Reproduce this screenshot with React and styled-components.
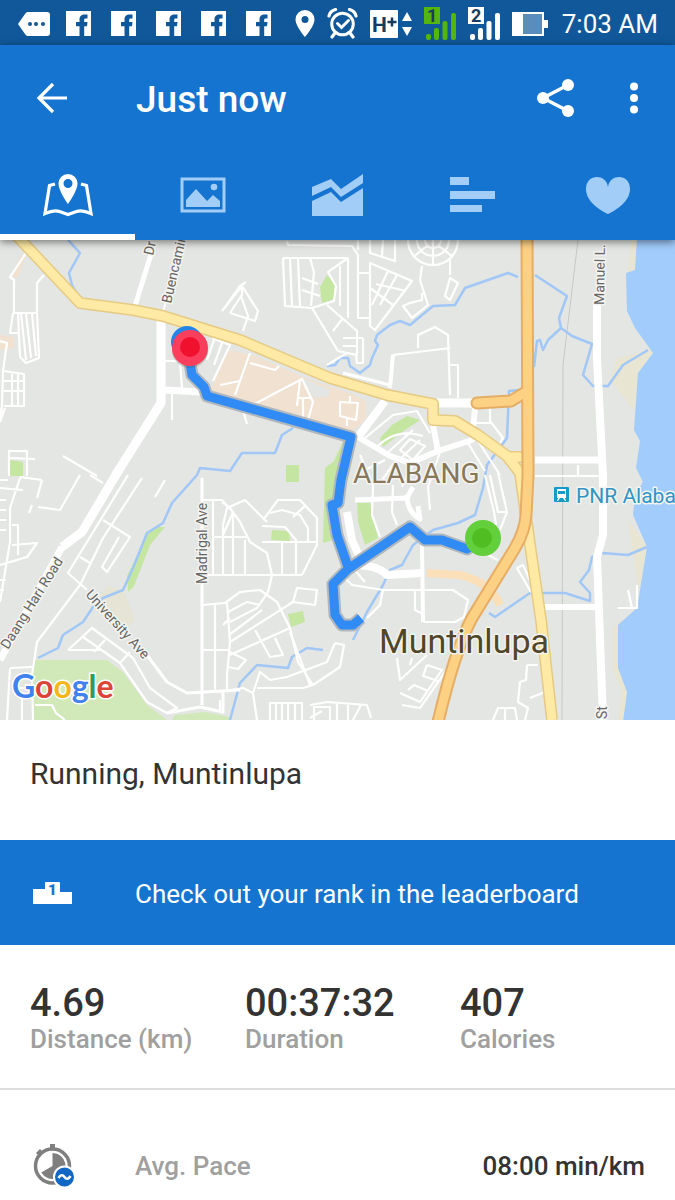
import React, { useState } from "react";
import styled, { createGlobalStyle } from "styled-components";

const GlobalStyle = createGlobalStyle`
  * {
    box-sizing: border-box;
  }
  body {
    margin: 0;
    background: #ffffff;
    color: #333333;
    font-family: Roboto, "Liberation Sans", sans-serif;
  }
  button {
    border: none;
    padding: 0;
    background: none;
    color: inherit;
    font: inherit;
    cursor: pointer;
  }
  svg {
    display: block;
  }
`;

const Page = styled.main`
  min-height: 100vh;
`;

const StatusBar = styled.div`
  display: flex;
  justify-content: space-between;
  align-items: center;
  height: 45px;
  padding: 2px 17px 0 18px;
  background-color: #10589a;
  color: #ffffff;
`;

const StatusGroup = styled.div`
  display: flex;
  align-items: center;
  gap: ${props => props.$gap}px;
`;

const Clock = styled.time`
  font-size: 26px;
  line-height: 32px;
  white-space: nowrap;
`;

const Header = styled.header`
  position: relative;
  background-color: #1474d0;
  color: #ffffff;
  box-shadow: 0 2px 8px rgba(0, 0, 0, 0.5);
`;

const AppBar = styled.div`
  display: flex;
  align-items: center;
  height: 105px;
  padding: 0 10px 0 20px;
`;

const Title = styled.h1`
  flex: 1;
  margin: 0 0 0 52px;
  padding-top: 4px;
  font-size: 37px;
  line-height: 44px;
  font-weight: 500;
`;

const IconButton = styled.button`
  display: grid;
  place-items: center;
  width: ${props => props.$width}px;
  height: 64px;
`;

const Tabs = styled.nav`
  display: grid;
  grid-template-columns: repeat(5, 1fr);
`;

const Tab = styled.button`
  display: grid;
  place-items: center;
  height: 90px;
  padding-top: 6px;
  border-bottom: 6px solid ${props => (props.$active ? "#ffffff" : "transparent")};
  color: ${props => (props.$active ? "#ffffff" : "#a1cdf6")};
`;

const MapView = styled.svg`
  width: 100%;
  height: 480px;
  background-color: #e4e6e3;
`;

const Label = styled.text`
  font-family: Roboto, sans-serif;
  font-size: ${props => props.$size}px;
  font-weight: ${props => props.$weight || 400};
  fill: ${props => props.$color || "#666666"};
  stroke: #f4f4f0;
  stroke-width: 3px;
  stroke-linejoin: round;
  paint-order: stroke;
`;

const Activity = styled.h2`
  margin: 0;
  padding: 36px 30px 48px;
  font-size: 30px;
  line-height: 36px;
  font-weight: 400;
`;

const Leaderboard = styled.button`
  display: flex;
  align-items: center;
  gap: 60px;
  width: 100%;
  height: 105px;
  padding: 2px 30px 0;
  background-color: #1474d0;
  color: #ffffff;
  font-size: 26px;
  line-height: 32px;
  text-align: left;
`;

const Stats = styled.dl`
  display: grid;
  grid-template-columns: repeat(3, 1fr);
  margin: 0;
  padding: 38px 0 33px 30px;
  border-bottom: 2px solid #dedede;
`;

const Stat = styled.div`
  display: flex;
  flex-direction: column-reverse;
`;

const StatLabel = styled.dt`
  color: #a0a0a0;
  font-size: 26px;
  line-height: 32px;
  font-weight: 500;
`;

const StatValue = styled.dd`
  margin: 0;
  font-size: 38px;
  line-height: 40px;
  font-weight: 500;
`;

const Detail = styled.dl`
  display: flex;
  align-items: center;
  margin: 0;
  padding: 60px 30px 18px;
`;

const DetailIcon = styled.div`
  width: 105px;
  height: 32px;
  display: flex;
  align-items: center;
`;

const DetailValue = styled.dd`
  margin: 0 0 0 auto;
  font-size: 26px;
  line-height: 32px;
  font-weight: 500;
`;

const TagIcon = () => (
  <svg width="32" height="26" viewBox="0 0 32 26">
    <path d="M10 1h19a3 3 0 0 1 3 3v18a3 3 0 0 1-3 3H10q-2 0-3-2L0 13l7-10q1-2 3-2z" fill="#fff" />
    <g fill="#10589a">
      <circle cx="12" cy="13" r="2" />
      <circle cx="18" cy="13" r="2" />
      <circle cx="25" cy="13" r="2" />
    </g>
  </svg>
);

const FacebookIcon = () => (
  <svg width="25" height="25" viewBox="0 0 25 25">
    <path
      fill="#fff"
      fillRule="evenodd"
      d="M0 0h25v25H0zM13.500 25V15.3H10V11h3.500V8.500C13.500 5 15.500 3.500 18.500 3.500h3v4h-2c-1 0-1.300.5-1.300 1.500v2h3.300l-.5 4.300h-2.800V25z"
    />
  </svg>
);

const PinIcon = () => (
  <svg width="20" height="27" viewBox="0 0 20 27">
    <path fill="#fff" fillRule="evenodd" d="M10 0a9.500 9.500 0 0 1 9.500 9.500C19.500 16 10 27 10 27S.5 16 .5 9.500A9.500 9.500 0 0 1 10 0zm0 6a3.500 3.500 0 1 0 0 7 3.500 3.500 0 0 0 0-7z" />
  </svg>
);

const AlarmIcon = () => (
  <svg width="31" height="31" viewBox="0 0 31 31" fill="none" stroke="#fff" strokeLinecap="round">
    <circle cx="15.500" cy="16" r="10.800" strokeWidth="3" />
    <path d="M2 8q1-5 6.500-6.500M29 8q-1-5-6.500-6.500M8 25l-3 4M23 25l3 4" strokeWidth="3.200" />
    <path d="M10.500 15.500l4 4 7-7" strokeWidth="3" />
  </svg>
);

const DataIcon = () => (
  <svg width="42" height="28" viewBox="0 0 42 28">
    <rect width="28" height="28" rx="1" fill="#fff" />
    <text x="2" y="22" fill="#183b60" fontFamily="Roboto, sans-serif" fontSize="21" fontWeight="700">H</text>
    <path d="M17.500 12h9M22 7.500v9" stroke="#183b60" strokeWidth="2.500" />
    <path d="M37 2l5 9H32zM37 26l5-9H32zM32 14h10" fill="#fff" />
  </svg>
);

const SignalIcon = ({ sim, color, ink }) => (
  <svg width="32" height="33" viewBox="0 0 32 33" fill={color}>
    <rect width="16" height="17" />
    <text x="3" y="15" fill={ink} fontFamily="Roboto, sans-serif" fontSize="18" fontWeight="700">{sim}</text>
    <rect x="2" y="27" width="5" height="6" rx="2" />
    <rect x="10" y="21" width="5" height="12" rx="2" />
    <rect x="18.500" y="14" width="5" height="19" rx="2" />
    <rect x="27" y="6" width="5" height="27" rx="2" />
  </svg>
);

const BatteryIcon = () => (
  <svg width="38" height="26" viewBox="0 0 38 26">
    <path d="M0 1h32v8h4v8h-4v8H0z" fill="#fff" />
    <path d="M11 3h19v20H11z" fill="#5b8dbc" />
  </svg>
);

const BackIcon = () => (
  <svg width="32" height="32" viewBox="0 0 32 32" fill="none" stroke="#fff" strokeWidth="3.200">
    <path d="M31 16H3M17 2L3 16l14 14" />
  </svg>
);

const ShareIcon = () => (
  <svg width="38" height="38" viewBox="0 0 38 38" fill="#fff">
    <path d="M31 6L6 19l25 13" fill="none" stroke="#fff" strokeWidth="3.500" />
    <circle cx="31" cy="6" r="6" />
    <circle cx="6" cy="19" r="6" />
    <circle cx="31" cy="32" r="6" />
  </svg>
);

const MoreIcon = () => (
  <svg width="10" height="32" viewBox="0 0 10 32" fill="#fff">
    <circle cx="5" cy="4.500" r="4" />
    <circle cx="5" cy="16" r="4" />
    <circle cx="5" cy="27.500" r="4" />
  </svg>
);

const MapIcon = () => (
  <svg width="52" height="44" viewBox="0 0 52 44">
    <path d="M13 11L7.500 12.500L3 40.500q9-4 14.500-2l8.500 3 8.500-3q5.500-2 14.500 2L44.500 12.500L39 11" fill="none" stroke="currentColor" strokeWidth="3.200" />
    <path fill="currentColor" fillRule="evenodd" d="M26 1a9.500 9.500 0 0 1 9.500 9.500C35.500 18 26 31 26 31s-9.500-13-9.500-20.500A9.500 9.500 0 0 1 26 1zm0 5a4.500 4.500 0 1 0 0 9 4.500 4.500 0 0 0 0-9z" />
  </svg>
);

const PhotoIcon = () => (
  <svg width="46" height="36" viewBox="0 0 46 36" fill="currentColor">
    <path d="M2 2h42v32H2z" fill="none" stroke="currentColor" strokeWidth="3" />
    <path d="M6 30V23l10-11 11 12 6-6 7 6v6z" />
    <circle cx="34" cy="10" r="3.300" />
  </svg>
);

const ChartIcon = () => (
  <svg width="52" height="42" viewBox="0 0 52 42" fill="currentColor">
    <path d="M0 13L19 5l10 10L51 0v9L29 23 19 13 0 22z" />
    <path d="M0 27l19-9 10 10L51 14v28H0z" />
  </svg>
);

const BarsIcon = () => (
  <svg width="46" height="36" viewBox="0 0 46 36" fill="currentColor">
    <path d="M0 0h19v8H0zM0 14h45v8H0zM0 28h32v7H0z" />
  </svg>
);

const HeartIcon = () => (
  <svg width="46" height="37" viewBox="0 0 46 37" fill="currentColor">
    <path d="M23 10C22 3 17 0 12 0 5 0 1 5 1 12c0 12 13 21 22 25 9-4 22-13 22-25C45 5 41 0 34 0c-5 0-10 3-11 10z" />
  </svg>
);

const PodiumIcon = () => (
  <svg width="45" height="24" viewBox="0 0 45 24">
    <path d="M3 7h12V1q0-1 1-1h13q1 0 1 1v9h12v12H3z" fill="#fff" />
    <text x="18" y="13" fill="#1474d0" fontFamily="Roboto, sans-serif" fontSize="15" fontWeight="900">1</text>
  </svg>
);

const PaceIcon = () => (
  <svg width="46" height="46" viewBox="0 0 46 46">
    <path d="M20 1h5v5h-5zM6 10l4-4 3 3-4 4z" fill="#7f7f7f" />
    <circle cx="22.500" cy="23" r="17" fill="#fff" stroke="#7f7f7f" strokeWidth="3.500" />
    <path d="M22.500 10a13 13 0 1 1-11.200 19.500L22.500 23z" fill="#7f7f7f" />
    <circle cx="34.500" cy="34" r="10.500" fill="#1168c4" stroke="#fff" strokeWidth="2" />
    <path d="M28.500 35q3-5 6-1t6-1" fill="none" stroke="#fff" strokeWidth="2.500" />
  </svg>
);

const WATER = [
  "M68 240L80 253L69 273L72 285L78 296",
  "M38 658L58 648L63 635L83 622L93 607L103 598L123 590L133 568L147 533L163 523L172 503L197 475L200 468L230 471L242 453H275L282 435L293 428",
  "M327 366L335 365L340 358H348L350 366L360 373L370 365L372 358L378 345L375 341L377 335L390 325L400 321L410 325L433 306L455 305L465 288L508 273L518 277",
  "M535 275L567 296L559 318L561 328L572 336L592 344L583 375L593 386H608L623 365L648 350",
  "M561 328L548 340L543 350L540 340L537 341L534 367",
  "M520 390L509 391L507 438L487 465L483 488L475 515L458 523L433 530L413 545L402 565L390 570L383 585L367 612L353 640",
  "M323 650L307 648L292 657L288 668L257 665L240 683L230 720",
  "M647 547L628 555L602 553L592 557L589 570L580 582L590 593V601L565 593H530L495 617L489 613",
];

// residential streets, two pixels wide
const STREETS = [
  "M28 250L10 277L14 280V313M44 275L37 283V313L39 358L26 363L20 357L18 313M13 313H37M21 313L26 360M26 313L31 358M32 313L36 356M13 313L10 333H18",
  "M0 341L7 343L3 371L24 374V406H4M4 381H24M4 391H24M12 374V406M18 374V406M3 371L2 405L0 421M5 408L0 422",
  "M9 476V451H27V476M10 458L35 459M63 456L97 476M163 361H180L182 388M164 320V388M172 388V420",
  "M222 311L242 286L258 311L255 321L230 313M230 313L241 296L248 316L243 331M242 286V296M223 310L240 286L246 282",
  "M212 338L230 345L213 381M214 340L207 360M222 343L214 365M250 353L235 395M250 363L275 370L279 366M220 385L240 381",
  "M283 258H348V318M283 258L285 306L312 308L338 351M298 258L300 306M310 258L314 272L311 306M290 259L292 306M302 278L318 284M302 290L320 296M348 258L328 272L336 286L334 301L312 308M340 266V306M327 305L357 331V355L338 351M333 331L343 318M363 338V363H357L356 355M343 338H363M343 346H358",
  "M287 241L288 245L352 246L358 255V318H370M358 240V250M370 263L412 281L375 330L370 326ZM358 273H370M388 271L372 305M370 288L393 305M376 284L406 291M397 275L380 305M370 240V253L395 261V240M383 240L382 256",
  "M408 240A25 25 0 0 0 458 240M417 240A16 16 0 0 0 449 240M425 240A8 8 0 0 0 441 240M433 240V266M413 257L427 246M453 257L439 246M422 266L420 280L428 305L412 318L403 306L410 303L422 300V293M450 258V275M450 278L458 283L450 300L445 296Z",
  "M393 355L450 348M418 348V335L435 327L448 335L450 395M450 365H458V398M327 365L347 353",
  "M247 424L243 410L302 379L313 402L308 420M300 380L297 406M298 398H312M303 398V419M340 402L358 403L356 420L340 416ZM350 396V403M347 418V426",
  "M490 408V421L503 438L500 443M475 423H490M468 443L485 471M478 441L500 475M490 475L498 512H507L500 530M498 473L507 512M485 475L494 512L496 525",
  "M365 438L393 415L417 411L430 433M375 449Q395 427 423 436M386 454L413 430M400 450L410 439L425 446L413 460ZM400 459L420 440M360 455L373 485L372 515L380 537M393 485L392 512L397 525M365 470L385 460M382 480L395 462M402 487L415 460M440 452L428 487L430 510",
  "M345 578L352 585L383 590H453L468 600L464 617L455 622H423M415 590V610L423 614M383 590L380 605L367 618M352 567L365 582",
  "M203 500H222L233 512L223 535V575M213 500V575M203 575H302M213 537H248M233 512V575M223 575V525L227 508L245 500L267 522M222 502L230 508L240 522L250 542L267 553L272 575L268 592L257 608L230 622M245 540V575M262 542H317M263 520L278 500H300L317 518V545L302 575M270 513L282 510L300 515L308 528V543M262 526L285 527L296 540V575M282 543V575M293 517L306 505",
  "M203 605L225 603L240 592L260 590L277 602L290 628L298 662L313 685M215 605V692M227 603L230 642L227 675V692M203 650H230M230 642L293 602M230 655L290 628M297 588L317 590L315 605L293 602ZM228 612L247 602L260 605M255 630L270 657L283 655L275 638M229 635L262 610M223 625L230 618M230 652L246 660L238 669L228 667",
  "M335 643L344 645L340 667L313 685L303 688H257M335 643L327 662L287 677L270 680L260 672L253 693L257 720M220 692L243 688L253 693M220 700V712M290 632L310 685",
  "M270 720V703H302V720M276 703V720M282 703V720M288 703V720M295 703V720M310 705L327 702L367 705L371 718M314 720V707H330V720M337 720V704M348 705V720M361 705L353 720M310 718L322 711",
  "M128 475L68 573L87 590M103 520L130 537L107 572L102 567L119 537M142 478L103 538L80 585L37 642L32 675L33 720M80 557L90 563M68 650L92 628L133 658L150 688L177 708L167 713L147 702L120 663L83 637M68 650H100M105 640L94 652M130 652L120 663",
  "M0 488L23 490M0 480H8M42 480L20 477M20 478L10 508V542L0 602M38 507L60 510L80 475M90 475L103 483M165 480L155 497M42 480L37 498M32 505L29 513M12 525H18V555M0 565L27 557L37 543L12 545M0 500H6M0 510H6M0 520H6M0 530H6M0 580H6M0 590H4M10 668L32 667M10 668L7 720M22 695V720M12 688H32",
  "M35 705H52L56 713L65 720M397 658L400 680L427 655M412 658L410 665M427 665L442 670L420 702L400 693M427 665L423 676L438 681M402 705L420 708L450 665M408 690L414 685L428 691",
  "M527 665H538M527 665L526 680L520 682L518 702L528 708L525 720M545 692L530 698M493 720L498 708H515L517 720M505 708V720M517 568L523 565L532 585L531 592ZM488 555L498 560M618 608H637V585M628 590L632 608M578 465V476",
];

// [path, width]
const ROADS = [
  ["M152 251L135 306", 5],
  ["M180 250L163 312", 2],
  ["M161 320V403L115 476", 9],
  ["M120 468L82 532L62 547", 9],
  ["M62 547L0 660", 7],
  ["M165 390L200 392", 7],
  ["M202 478V705", 3],
  ["M147 655L167 682L187 693L240 690", 3],
  ["M167 713L200 707L223 712V693", 3],
  ["M393 355L390 388", 4],
  ["M343 373L390 385", 3],
  ["M437 403H477", 9],
  ["M385 401L358 437", 8],
  ["M433 425L438 451L472 440L475 408", 6],
  ["M358 437L390 456L410 463L438 451", 6],
  ["M347 512L352 540L360 558", 8],
  ["M355 500L407 498L413 487M407 495Q407 512 420 519L418 506", 5],
  ["M353 565Q378 565 387 575L423 573", 8],
  ["M422 545L423 622", 4],
  ["M597 300V358L603 476V535L597 557L603 720", 8],
  ["M535 460H602", 7],
  ["M535 476H602", 2],
  ["M543 607H600", 6],
];

const YELLOW =
  "M17 236L80 303L133 310L163 316L240 340L287 360L330 378L387 395L433 404V420L455 421L478 435L507 456L520 473L530 545L541 620L552 720M510 457H522";
const ORANGE = "M527 236L528 476L526 515Q525 531 515 548L472 618Q455 650 438 722M477 403L511 401L524 393";
const SEA =
  "M637 238L635 270L626 273L627 311L635 328L653 353L638 373L634 430L640 441L636 468L643 482L635 495L633 515L647 547L637 608L618 625V668L627 692L623 722H680V238Z";
const ROUTE =
  "M187 345L192 375L204 387L207 396L351 437L341 480L338 503L332 505L337 535L348 567M361 618L353 625H342L335 615L333 584L348 569L410 527L425 540H442L467 549L482 539";

const RunMap = () => (
  <MapView viewBox="0 240 675 480" preserveAspectRatio="xMidYMid slice" role="img" aria-label="Route map">
    <path fill="#f0e1d0" d="M228 350L256 356L305 378L355 395L366 402L366 418L350 435L210 392ZM20 257L28 250L18 278L11 276ZM0 335L14 337L14 348L0 350Z" />
    <path fill="#e4e6e3" d="M302 378L330 390L328 397L313 397Z" />
    <path fill="#e6e4d5" d="M108 585L125 593L135 620L125 630L93 604Z" />
    <path fill="#e9e5d3" d="M632 240H640V275H627ZM635 328L651 350L617 358L610 380L634 410L640 372L655 355ZM628 520L647 547L637 608L613 628V670L622 692L618 720H630L640 600Z" />
    <path fill="#d1e8b9" d="M33 660H107L123 672L147 705L167 720H33ZM175 715L205 712L230 717V720H172Z" />
    <path
      fill="#c4e6a0"
      d="M10 460L23 462V476H10ZM327 275L335 284L334 299L322 303L320 287ZM380 438L392 425L407 416L420 420L405 430L383 447ZM343 441L349 441L337 500L333 540L323 543L325 468L334 461ZM286 465H299V482H286ZM357 503H370L378 538L365 545L358 522ZM272 530L289 531L290 541L271 540ZM288 614L303 611L305 622L291 627ZM165 527L158 527L148 533L127 576L128 592L134 586L150 545Z"
    />
    <path d="M427 573L460 575Q490 582 500 605" fill="none" stroke="#fadfb8" strokeWidth="8" />
    <path fill="#a1ccfc" d={SEA} />
    <g fill="none" strokeLinejoin="round">
      <path d="M578 240L563 365L562 720" stroke="#c6c8c6" strokeWidth="1" />
      {WATER.map(d => (
        <path key={d} d={d} stroke="#a1c7f7" strokeWidth="2.500" />
      ))}
      {STREETS.map(d => (
        <path key={d} d={d} stroke="#ffffff" strokeWidth="2.200" />
      ))}
      {ROADS.map(([d, width]) => (
        <path key={d} d={d} stroke="#ffffff" strokeWidth={width} />
      ))}
      <path d={YELLOW} stroke="#e6ca83" strokeWidth="12" />
      <path d={YELLOW} stroke="#feeaa4" strokeWidth="9" />
      <g strokeLinecap="round">
        <path d={ORANGE} stroke="#e5ad65" strokeWidth="13" />
        <path d={ORANGE} stroke="#fdd184" strokeWidth="9" />
      </g>
    </g>

    <Label $size={14} transform="translate(153 256) rotate(-77)">Dr</Label>
    <Label $size={14} transform="translate(171 304) rotate(-77)">Buencamin</Label>
    <Label $size={14} transform="translate(604 305) rotate(-89)">Manuel L.</Label>
    <Label $size={14} transform="translate(207 584) rotate(-90)">Madrigal Ave</Label>
    <Label $size={14} transform="translate(8 650) rotate(-58)">Daang Hari Road</Label>
    <Label $size={14} transform="translate(85 595) rotate(48)">University Ave</Label>
    <Label $size={14} transform="translate(607 719) rotate(-90)">St</Label>
    <Label $size={28} $color="#87775b" x="353" y="483">ALABANG</Label>
    <Label $size={34} $color="#504628" x="379" y="653">Muntinlupa</Label>
    <Label $size={21} $color="#3294c3" x="576" y="503">PNR Alabang</Label>
    <rect x="554" y="487" width="15" height="15" rx="1" fill="#149bc8" />
    <path fill="#fff" fillRule="evenodd" d="M557 489h9v9h-9zM558 491v3h7v-3zM558 498h2l-2 3h-1zM563 498h2l1 3h-1z" />

    <g fill="none" strokeLinejoin="round">
      <path d={ROUTE} stroke="#b1b8bd" strokeWidth="13" />
      <path d={ROUTE} stroke="#318bf4" strokeWidth="9" />
    </g>
    <circle cx="187" cy="342" r="16" fill="#2485e8" />
    <circle cx="190" cy="350" r="18" fill="#555555" opacity="0.25" />
    <circle cx="190" cy="348" r="18" fill="#fb3e5c" />
    <circle cx="190" cy="347" r="10" fill="#f0112f" />
    <circle cx="483" cy="538" r="18" fill="#63cf3a" />
    <circle cx="482" cy="538" r="10" fill="#50bd22" />

    <text x="12" y="698" fontFamily="Lato, sans-serif" fontSize="32" fontWeight="700" stroke="#fff" strokeWidth="3" paintOrder="stroke">
      <tspan fill="#4182ee">G</tspan>
      <tspan fill="#dc4437">o</tspan>
      <tspan fill="#f4b71a">o</tspan>
      <tspan fill="#4182ee">g</tspan>
      <tspan fill="#2f9d58">l</tspan>
      <tspan fill="#dc4437">e</tspan>
    </text>
  </MapView>
);

const TABS = [
  { name: "Map", Icon: MapIcon },
  { name: "Photos", Icon: PhotoIcon },
  { name: "Graph", Icon: ChartIcon },
  { name: "Splits", Icon: BarsIcon },
  { name: "Heart rate", Icon: HeartIcon },
];

const STATS = [
  { label: "Distance (km)", value: "4.69" },
  { label: "Duration", value: "00:37:32" },
  { label: "Calories", value: "407" },
];

const App = () => {
  const [tab, setTab] = useState("Map");

  return (
    <Page>
      <GlobalStyle />
      <StatusBar>
        <StatusGroup $gap={16}>
          <TagIcon />
          <StatusGroup $gap={20}>
            {[1, 2, 3, 4, 5].map(n => (
              <FacebookIcon key={n} />
            ))}
          </StatusGroup>
        </StatusGroup>
        <StatusGroup $gap={12}>
          <PinIcon />
          <AlarmIcon />
          <DataIcon />
          <SignalIcon sim="1" color="#54b50f" ink="#183b60" />
          <SignalIcon sim="2" color="#ffffff" ink="#183b60" />
          <BatteryIcon />
          <Clock>7:03 AM</Clock>
        </StatusGroup>
      </StatusBar>
      <Header>
        <AppBar>
          <IconButton $width={64} aria-label="Back">
            <BackIcon />
          </IconButton>
          <Title>Just now</Title>
          <IconButton $width={94} aria-label="Share">
            <ShareIcon />
          </IconButton>
          <IconButton $width={62} aria-label="More options">
            <MoreIcon />
          </IconButton>
        </AppBar>
        <Tabs>
          {TABS.map(({ name, Icon }) => (
            <Tab key={name} $active={tab === name} aria-label={name} onClick={() => setTab(name)}>
              <Icon />
            </Tab>
          ))}
        </Tabs>
      </Header>
      <RunMap />
      <Activity>Running, Muntinlupa</Activity>
      <Leaderboard>
        <PodiumIcon />
        Check out your rank in the leaderboard
      </Leaderboard>
      <Stats>
        {STATS.map(({ label, value }) => (
          <Stat key={label}>
            <StatLabel>{label}</StatLabel>
            <StatValue>{value}</StatValue>
          </Stat>
        ))}
      </Stats>
      <Detail>
        <DetailIcon>
          <PaceIcon />
        </DetailIcon>
        <StatLabel>Avg. Pace</StatLabel>
        <DetailValue>08:00 min/km</DetailValue>
      </Detail>
    </Page>
  );
};

export default App;
